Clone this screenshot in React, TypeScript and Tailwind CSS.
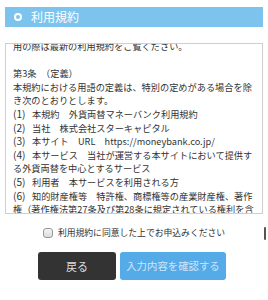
const lines: [string, string][] = [
  ["", "用の際は最新の利用規約をご覧ください。"],
  ["", ""],
  ["", "第3条　（定義）"],
  ["", "本規約における用語の定義は、特別の定めがある場合を除き次のとおりとします。"],
  ["(1)", "本規約　外貨両替マネーバンク利用規約"],
  ["(2)", "当社　株式会社スターキャピタル"],
  ["(3)", "本サイト　URL　https://moneybank.co.jp/"],
  ["(4)", "本サービス　当社が運営する本サイトにおいて提供する外貨両替を中心とするサービス"],
  ["(5)", "利用者　本サービスを利用される方"],
  ["(6)", "知的財産権等　特許権、商標権等の産業財産権、著作権（著作権法第27条及び第28条に規定されている権利を含みます。）"],
];

export default function App() {
  return (
    <div
      className="relative w-[268px] h-[300px] overflow-hidden bg-white text-[#333]"
      style={{ fontFamily: '"Noto Sans CJK JP", "Noto Sans", sans-serif' }}
    >
      <div className="mx-[5px] mt-[7px] h-[20px] bg-[#7cc4ee] flex items-center pl-[9px]">
        <span className="w-[8px] h-[8px] rounded-full border-[2px] border-white" />
        <span className="ml-[9px] text-[12px] leading-none text-white">利用規約</span>
      </div>

      <div className="mx-[5px] mt-[16px] h-[171px] border border-[#cfcfcf] overflow-hidden pl-[7px]">
        <div className="-mt-[4px] w-[244px] text-[9.2px] leading-[13.6px]">
          {lines.map(([n, t], i) => (
            <p key={i} className="min-h-[13.6px]">
              {n && <span className="inline-block w-[19px] text-[10.2px] leading-[8px]">{n}</span>}
              {t}
            </p>
          ))}
        </div>
      </div>

      <label className="mt-[12px] flex items-center justify-center gap-[5px]">
        <span className="w-[10px] h-[10px] shrink-0 rounded-[3px] border border-[#999] bg-gradient-to-b from-[#f4f4f4] to-[#dcdcdc]" />
        <span className="text-[8.8px] leading-[14px]">利用規約に同意した上でお申込みください</span>
      </label>

      <div className="mt-[12px] flex pl-[38px] gap-[4px]">
        <button className="w-[78px] h-[28px] rounded-[3px] bg-[#333] text-[#ddd] text-[11px]">戻る</button>
        <button className="w-[106px] h-[28px] rounded-[3px] bg-[#55aae8] text-[#cde6f8] text-[10.4px]">入力内容を確認する</button>
      </div>

      <div className="absolute right-[2px] top-[227px] w-[2px] h-[13px] rounded bg-[#555]" />
    </div>
  );
}
